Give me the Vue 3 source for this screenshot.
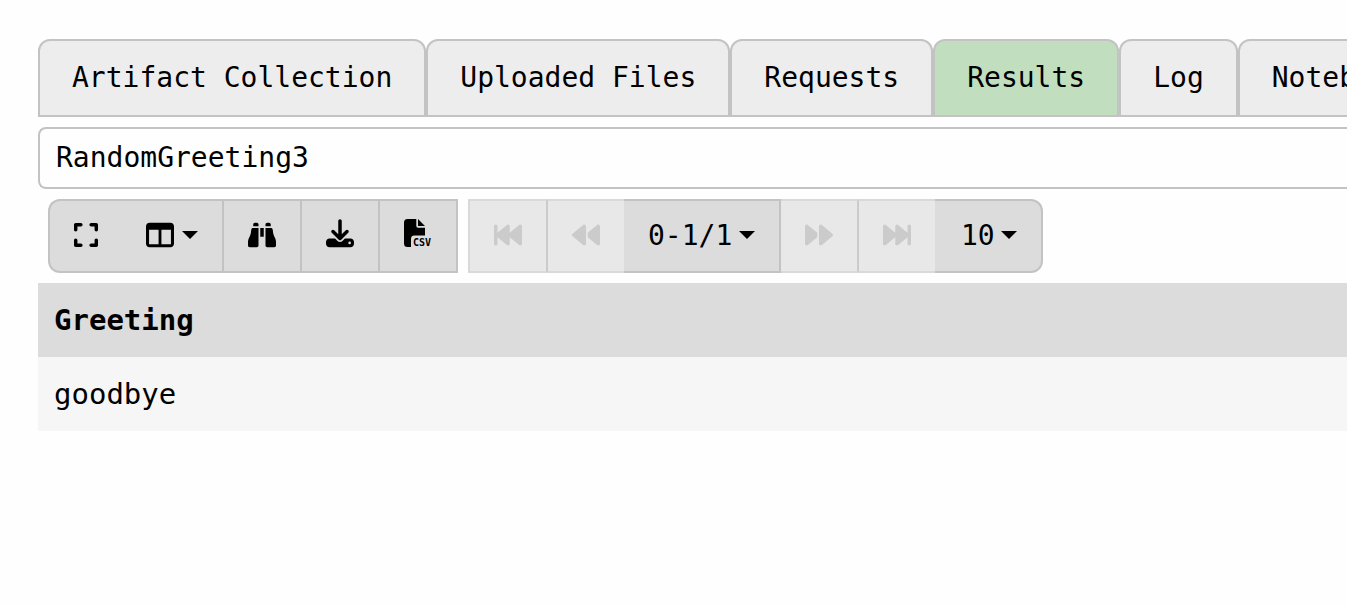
<script setup>
import { ref } from 'vue'

const tabs = ['Artifact Collection', 'Uploaded Files', 'Requests', 'Results', 'Log', 'Notebook']
const active = ref('Results')
const result = ref('RandomGreeting3')
const range = ref('0-1/1')
const pageSize = ref('10')
const columns = ['Greeting']
const rows = [['goodbye']]
</script>

<template>
  <main class="page">
    <nav class="tabs" role="tablist">
      <button
        v-for="tab in tabs"
        :key="tab"
        type="button"
        role="tab"
        class="tab"
        :class="{ active: tab === active }"
        :aria-selected="tab === active"
        @click="active = tab"
      >{{ tab }}</button>
    </nav>

    <input v-model="result" class="result" type="text" aria-label="Result name">

    <div class="toolbar">
      <div class="group">
        <button type="button" class="tool first" aria-label="Full screen">
          <svg class="icon narrow" viewBox="0 0 448 512"><path d="M32 32C14.3 32 0 46.3 0 64v96c0 17.7 14.3 32 32 32s32-14.3 32-32V96h64c17.7 0 32-14.3 32-32s-14.3-32-32-32H32zM64 352c0-17.7-14.3-32-32-32s-32 14.3-32 32v96c0 17.7 14.3 32 32 32h96c17.7 0 32-14.3 32-32s-14.3-32-32-32H64V352zM320 32c-17.7 0-32 14.3-32 32s14.3 32 32 32h64v64c0 17.7 14.3 32 32 32s32-14.3 32-32V64c0-17.7-14.3-32-32-32H320zM448 352c0-17.7-14.3-32-32-32s-32 14.3-32 32v64H320c-17.7 0-32 14.3-32 32s14.3 32 32 32h96c17.7 0 32-14.3 32-32V352z" /></svg>
        </button>
        <button type="button" class="tool wide-gap" aria-label="Columns">
          <svg class="icon" viewBox="0 0 512 512"><path fill-rule="evenodd" d="M64 32H448c35.300 0 64 28.700 64 64V416c0 35.300-28.700 64-64 64H64c-35.300 0-64-28.700-64-64V96C0 60.700 28.700 32 64 32zM56 160V424H230V160zM282 160V424H456V160z" /></svg>
          <svg class="caret" viewBox="0 0 16 8"><path d="M0 0H16L8 8z" /></svg>
        </button>
        <button type="button" class="tool" aria-label="Search">
          <svg class="icon" viewBox="0 0 512 512"><path d="M128 32h32c17.700 0 32 14.300 32 32V96H96V64c0-17.700 14.300-32 32-32zm64 96V448c0 17.700-14.300 32-32 32H32c-17.700 0-32-14.300-32-32V388.900c0-34.600 9.400-68.600 27.200-98.300C40.900 267.800 49.700 242.400 53 216L60.500 156c2-16 15.600-28 31.800-28H192zm227.800 0c16.100 0 29.800 12 31.800 28L459 216c3.300 26.400 12.100 51.800 25.800 74.600c17.800 29.700 27.200 63.700 27.200 98.300V448c0 17.700-14.300 32-32 32H352c-17.700 0-32-14.300-32-32V128h99.800zM320 64c0-17.700 14.300-32 32-32h32c17.700 0 32 14.300 32 32V96H320V64zm-32 64V288H224V128h64z" /></svg>
        </button>
        <button type="button" class="tool" aria-label="Download">
          <svg class="icon" viewBox="0 32 512 512" overflow="visible"><path d="M288 32c0-17.700-14.300-32-32-32s-32 14.300-32 32V274.700l-73.400-73.400c-12.500-12.500-32.800-12.500-45.300 0s-12.500 32.800 0 45.300l128 128c12.500 12.500 32.800 12.500 45.300 0l128-128c12.500-12.500 12.500-32.800 0-45.300s-32.800-12.500-45.300 0L288 274.700V32zM64 352c-35.300 0-64 28.700-64 64v32c0 35.300 28.700 64 64 64H448c35.300 0 64-28.700 64-64V416c0-35.300-28.700-64-64-64H346.500l-45.300 45.300c-25 25-65.500 25-90.500 0L165.500 352H64zm368 56a24 24 0 1 1 0 48 24 24 0 1 1 0-48z" /></svg>
        </button>
        <button type="button" class="tool" aria-label="Download CSV">
          <svg class="icon" viewBox="0 2 28 28" overflow="visible">
            <path d="M3.500 0H12.300V7Q12.300 8.700 14 8.700H21V16.600H10.500Q7 16.600 7 20V28H3.500Q0 28 0 24.500V3.500Q0 0 3.500 0zM14 0L21 7H14z" />
            <text class="csv" x="9" y="27">CSV</text>
          </svg>
        </button>
      </div>

      <div class="group">
        <button type="button" class="tool first" disabled aria-label="First page">
          <svg class="icon" viewBox="0 0 512 512"><path d="M493.600 445c-11.200 5.300-24.500 3.600-34.100-4.400L288 297.700V416c0 12.400-7.200 23.700-18.400 29s-24.500 3.600-34.100-4.400L64 297.700V416c0 17.700-14.300 32-32 32s-32-14.300-32-32V96C0 78.300 14.300 64 32 64s32 14.300 32 32V214.300L235.500 71.400c9.500-7.900 22.800-9.700 34.100-4.400S288 83.600 288 96V214.300L459.500 71.400c9.500-7.900 22.800-9.700 34.100-4.400S512 83.600 512 96V416c0 12.400-7.200 23.700-18.400 29z" /></svg>
        </button>
        <button type="button" class="tool open" disabled aria-label="Previous page">
          <svg class="icon" viewBox="0 0 512 512"><path d="M459.500 440.600c9.500 7.900 22.800 9.700 34.100 4.400s18.400-16.600 18.400-29V96c0-12.400-7.200-23.700-18.400-29s-24.500-3.600-34.100 4.400L288 214.300V297.700L459.500 440.600zM256 352V96c0-12.400-7.200-23.700-18.400-29s-24.500-3.600-34.100 4.400l-192 160C4.200 237.500 0 246.500 0 256s4.200 18.500 11.500 24.600l192 160c9.500 7.900 22.800 9.700 34.100 4.400s18.400-16.600 18.400-29V352z" /></svg>
        </button>
        <label class="tool pick">
          <select v-model="range" aria-label="Row range"><option>0-1/1</option></select>
          <svg class="caret" viewBox="0 0 16 8"><path d="M0 0H16L8 8z" /></svg>
        </label>
        <button type="button" class="tool" disabled aria-label="Next page">
          <svg class="icon" viewBox="0 0 512 512"><path transform="translate(512 0) scale(-1 1)" d="M459.500 440.600c9.500 7.900 22.800 9.700 34.100 4.400s18.400-16.600 18.400-29V96c0-12.400-7.200-23.700-18.400-29s-24.500-3.600-34.100 4.400L288 214.300V297.700L459.500 440.600zM256 352V96c0-12.400-7.200-23.700-18.400-29s-24.500-3.600-34.100 4.400l-192 160C4.200 237.500 0 246.500 0 256s4.200 18.500 11.500 24.600l192 160c9.500 7.900 22.800 9.700 34.100 4.400s18.400-16.600 18.400-29V352z" /></svg>
        </button>
        <button type="button" class="tool open" disabled aria-label="Last page">
          <svg class="icon" viewBox="0 0 512 512"><path transform="translate(512 0) scale(-1 1)" d="M493.600 445c-11.200 5.300-24.500 3.600-34.100-4.400L288 297.700V416c0 12.400-7.200 23.700-18.400 29s-24.500 3.600-34.100-4.400L64 297.700V416c0 17.700-14.300 32-32 32s-32-14.300-32-32V96C0 78.300 14.300 64 32 64s32 14.300 32 32V214.300L235.500 71.400c9.500-7.900 22.800-9.700 34.100-4.400S288 83.600 288 96V214.300L459.500 71.400c9.500-7.900 22.800-9.700 34.100-4.400S512 83.600 512 96V416c0 12.400-7.200 23.700-18.400 29z" /></svg>
        </button>
        <label class="tool pick last">
          <select v-model="pageSize" aria-label="Rows per page"><option>10</option></select>
          <svg class="caret" viewBox="0 0 16 8"><path d="M0 0H16L8 8z" /></svg>
        </label>
      </div>
    </div>

    <table class="grid">
      <thead>
        <tr><th v-for="name in columns" :key="name" scope="col">{{ name }}</th></tr>
      </thead>
      <tbody>
        <tr v-for="(row, i) in rows" :key="i"><td v-for="(cell, j) in row" :key="j">{{ cell }}</td></tr>
      </tbody>
    </table>
  </main>
</template>

<style>
html { background: #fefefe; overflow-x: hidden; }
</style>

<style scoped>
.page {
  box-sizing: border-box;
  padding: 39px 0 39px 38px;
  display: flex;
  flex-direction: column;
  gap: 10px;
  overflow: hidden;
  color: #000;
  font-family: "DejaVu Sans Mono", "Liberation Mono", monospace;
  font-size: 28px;
  line-height: 38px;
}
button, input, select {
  margin: 0;
  font: inherit;
  color: inherit;
}
.tabs { display: flex; }
.tab {
  flex: none;
  padding: 18px 32px;
  border: 2px solid #c3c3c3;
  border-radius: 12px 12px 0 0;
  background: #ededed;
  white-space: nowrap;
}
.tab.active { background: #c1dfbf; }
.result {
  box-sizing: border-box;
  width: 100%;
  padding: 10px 16px;
  border: 2px solid #c3c3c3;
  border-right: 0;
  border-radius: 8px 0 0 8px;
  background: #fefefe;
}
.toolbar {
  display: flex;
  gap: 10px;
  padding-left: 10px;
}
.group { display: flex; }
.tool {
  display: flex;
  align-items: center;
  gap: 6px;
  padding: 16px 24px;
  border: 2px solid #c3c3c3;
  border-left-width: 0;
  border-radius: 0;
  background: #dcdcdc;
}
.tool.first { border-left-width: 2px; }
.group:first-child .first {
  border-right-width: 0;
  border-radius: 12px 0 0 12px;
}
.tool.wide-gap { gap: 8px; }
.tool.last {
  padding-left: 26px;
  border-radius: 0 12px 12px 0;
}
.tool:disabled {
  border-color: #d9d9d9 #cbcbcb #d9d9d9 #d9d9d9;
  background: #e8e8e8;
  color: #cbcbcb;
}
.tool.open { border-right-width: 0; }
.pick select {
  appearance: none;
  padding: 0;
  border: 0;
  background: transparent;
}
.icon {
  display: block;
  width: 28px;
  height: 28px;
  margin: 4px 0 6px;
  fill: currentColor;
}
.icon.narrow { width: 24px; }
.caret {
  width: 16px;
  height: 8px;
  margin-bottom: 2px;
  fill: currentColor;
}
.csv {
  font-size: 10px;
  font-weight: 700;
  line-height: 10px;
}
.grid {
  width: 100%;
  border-collapse: collapse;
  font-size: 29px;
}
.grid th, .grid td {
  padding: 18px 16px;
  text-align: left;
}
.grid th { background: #dcdcdc; }
.grid td { background: #f6f6f6; }
</style>
